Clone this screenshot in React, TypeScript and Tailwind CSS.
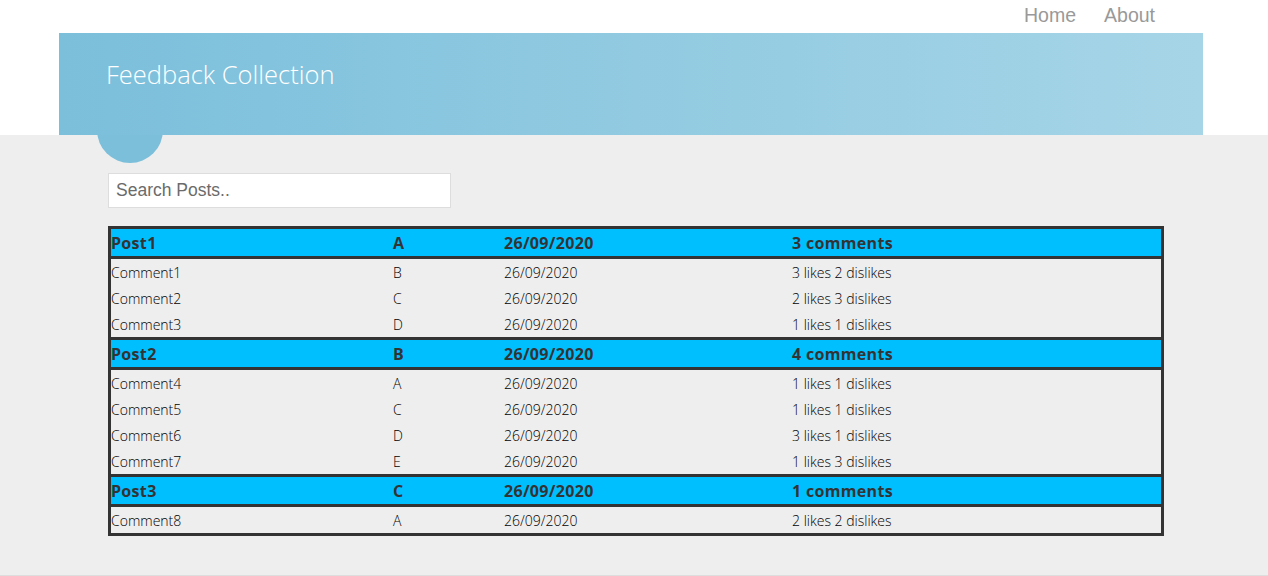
import React from 'react'

type Comment = { name: string; grade: string; date: string; votes: string }
type Post = { name: string; grade: string; date: string; comments: Comment[] }

const posts: Post[] = [
	{
		name: 'Post1',
		grade: 'A',
		date: '26/09/2020',
		comments: [
			{ name: 'Comment1', grade: 'B', date: '26/09/2020', votes: '3 likes 2 dislikes' },
			{ name: 'Comment2', grade: 'C', date: '26/09/2020', votes: '2 likes 3 dislikes' },
			{ name: 'Comment3', grade: 'D', date: '26/09/2020', votes: '1 likes 1 dislikes' },
		],
	},
	{
		name: 'Post2',
		grade: 'B',
		date: '26/09/2020',
		comments: [
			{ name: 'Comment4', grade: 'A', date: '26/09/2020', votes: '1 likes 1 dislikes' },
			{ name: 'Comment5', grade: 'C', date: '26/09/2020', votes: '1 likes 1 dislikes' },
			{ name: 'Comment6', grade: 'D', date: '26/09/2020', votes: '3 likes 1 dislikes' },
			{ name: 'Comment7', grade: 'E', date: '26/09/2020', votes: '1 likes 3 dislikes' },
		],
	},
	{
		name: 'Post3',
		grade: 'C',
		date: '26/09/2020',
		comments: [
			{ name: 'Comment8', grade: 'A', date: '26/09/2020', votes: '2 likes 2 dislikes' },
		],
	},
]

const row = 'grid grid-cols-[282px_111px_288px_1fr] items-center'

function PostHeader({ post, first }: { post: Post; first: boolean }) {
	return (
		<div
			className={`${row} border-b-[3px] border-[#333] bg-[#00bfff] text-[16px] font-bold tracking-[0.02em] text-[#333] ${first ? 'h-[30px]' : 'h-[33px] border-t-[3px]'}`}
		>
			<span>{post.name}</span>
			<span>{post.grade}</span>
			<span>{post.date}</span>
			<span>{post.comments.length} comments</span>
		</div>
	)
}

function CommentRow({ comment }: { comment: Comment }) {
	return (
		<div className={`${row} h-[26px] text-[14px] font-light text-black`}>
			<span>{comment.name}</span>
			<span>{comment.grade}</span>
			<span>{comment.date}</span>
			<span>{comment.votes}</span>
		</div>
	)
}

export default function App() {
	return (
		<div className="flex min-h-[576px] flex-col bg-white font-['Open_Sans',sans-serif]">
			<nav className="flex h-[32px] items-center justify-end gap-[28px] pr-[113px] font-['Liberation_Sans',sans-serif] text-[19.5px] text-[#999]">
				<a>Home</a>
				<a>About</a>
			</nav>
			<div className="relative z-10 mt-px ml-[59px] flex h-[102px] w-[1144px] items-center bg-gradient-to-r from-[#7bbfdb] to-[#a6d5e7] pb-[20px] pl-[47px]">
				<h1 className="text-[25.5px] font-light text-white">Feedback Collection</h1>
			</div>
			<main className="relative flex-1 border-b border-[#ddd] bg-[#eeeeee] px-[108px] pb-[38px]">
				<div className="absolute left-[97px] top-[-38px] h-[66px] w-[66px] rounded-full bg-[#7bbfdb]" />
				<input
					placeholder="Search Posts.."
					className="mt-[38px] h-[35px] w-[343px] border border-[#ddd] bg-white px-[7px] font-['Liberation_Sans',sans-serif] text-[17.5px] text-[#555] placeholder:text-[#6b6b6b] outline-none"
				/>
				<div className="mt-[18px] w-[1056px] border-[3px] border-b-0 border-[#333]">
					{posts.map((post, i) => (
						<div key={post.name}>
							<PostHeader post={post} first={i === 0} />
							{post.comments.map((c) => (
								<CommentRow key={c.name} comment={c} />
							))}
						</div>
					))}
					<div className="border-b-[3px] border-[#333]" />
				</div>
			</main>
		</div>
	)
}
